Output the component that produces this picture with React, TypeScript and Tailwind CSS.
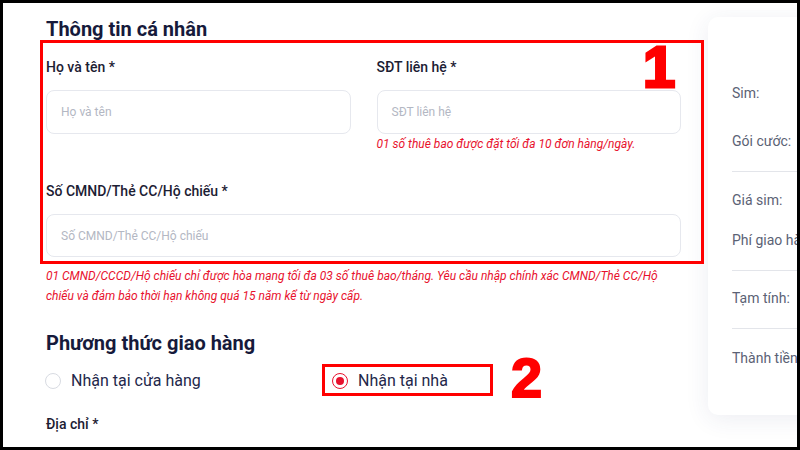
import React from 'react';

const Field: React.FC<{ label: string; placeholder: string; note?: string }> = ({ label, placeholder, note }) => (
  <div className="flex flex-col">
    <div className="h-5 text-[14px] leading-5 font-medium text-[#1c2033]">{label}</div>
    <div className="mt-[13px] h-[44px] rounded-lg border border-[#e6e8ee] bg-white px-[14px] flex items-center text-[12px] text-[#b3b7c3]">
      {placeholder}
    </div>
    {note && <div className="mt-[2px] h-4 text-[12px] leading-4 italic text-[#e8112d]">{note}</div>}
  </div>
);

const Radio: React.FC<{ checked?: boolean; label: string }> = ({ checked, label }) => (
  <label className="flex items-center gap-[10px]">
    <span
      className={`w-4 h-4 rounded-full border-[1.5px] flex items-center justify-center ${
        checked ? "border-[#e8112d]" : "border-[#d8dbe2]"
      }`}
    >
      {checked && <span className="w-2 h-2 rounded-full bg-[#e8112d]" />}
    </span>
    <span className="text-[16px] leading-6 text-[#23274a]">{label}</span>
  </label>
);

const SummaryRow: React.FC<{ label: string; className?: string }> = ({ label, className = "" }) => (
  <div className={`h-5 text-[14px] leading-5 text-[#5b6275] whitespace-nowrap ${className}`}>{label}</div>
);

export default function App() {
  return (
    <div className="w-[800px] h-[450px] border-[3px] border-black bg-white overflow-hidden [font-family:Roboto,'Noto_Sans',sans-serif]">
      <div className="relative flex h-full">
        {/* form */}
        <div className="w-[678px] shrink-0 pl-[43px] pt-[12px]">
          <h2 className="h-7 text-[20px] leading-7 font-bold text-[#161a3b]">Thông tin cá nhân</h2>
          <div className="mt-[14px] grid grid-cols-2 gap-x-[26px] w-[635px] items-start">
            <Field label="Họ và tên *" placeholder="Họ và tên" />
            <Field
              label="SĐT liên hệ *"
              placeholder="SĐT liên hệ"
              note="01 số thuê bao được đặt tối đa 10 đơn hàng/ngày."
            />
          </div>
          <div className="mt-[29px] w-[635px]">
            <div className="h-5 text-[14px] leading-5 font-medium text-[#1c2033]">Số CMND/Thẻ CC/Hộ chiếu *</div>
            <div className="mt-[13px] h-[43px] rounded-lg border border-[#e6e8ee] px-[14px] flex items-center text-[12px] text-[#b3b7c3]">
              Số CMND/Thẻ CC/Hộ chiếu
            </div>
          </div>
          <p className="mt-[9px] w-[630px] text-[12px] leading-5 italic text-[#e8112d]">
            01 CMND/CCCD/Hộ chiếu chỉ được hòa mạng tối đa 03 số thuê bao/tháng. Yêu cầu nhập chính xác CMND/Thẻ CC/Hộ chiếu và đảm bảo thời hạn không quá 15 năm kể từ ngày cấp.
          </p>
          <h2 className="mt-[23px] h-7 text-[20px] leading-7 font-bold text-[#161a3b]">Phương thức giao hàng</h2>
          <div className="mt-[12px] flex -ml-[1px]">
            <div className="w-[287px]">
              <Radio label="Nhận tại cửa hàng" />
            </div>
            <Radio checked label="Nhận tại nhà" />
          </div>
          <div className="mt-[21px] h-5 text-[14px] leading-5 font-medium text-[#1c2033]">Địa chỉ *</div>
        </div>

        {/* order summary */}
        <div className="mt-[14px] ml-[27px] w-[300px] h-[398px] shrink-0 rounded-[10px] bg-white shadow-[0_4px_24px_rgba(40,50,110,0.09)] pl-6 pt-[66px]">
          <SummaryRow label="Sim:" />
          <SummaryRow label="Gói cước:" className="mt-[28px]" />
          <div className="mt-[20px] border-t border-[#e3e5ea]" />
          <SummaryRow label="Giá sim:" className="mt-[18px]" />
          <SummaryRow label="Phí giao hàng:" className="mt-[20px]" />
          <div className="mt-[20px] border-t border-[#e3e5ea]" />
          <SummaryRow label="Tạm tính:" className="mt-[17px]" />
          <div className="mt-[20px] border-t border-[#e3e5ea]" />
          <SummaryRow label="Thành tiền:" className="mt-[19px]" />
        </div>

        {/* annotations */}
        <div className="absolute left-[37px] top-[37px] w-[664px] h-[224px] border-[3px] border-[#ff0000] pointer-events-none" />
        <div className="absolute left-[319px] top-[361px] w-[171px] h-[32px] border-[3px] border-[#ff0000] pointer-events-none" />
        <div className="absolute left-[640px] top-[35px] text-[58px] leading-none font-bold text-[#ff0000] [-webkit-text-stroke:3px_#ff0000] [font-family:'Liberation_Sans',Arial,sans-serif]">
          1
        </div>
        <div className="absolute left-[508px] top-[347px] text-[56px] leading-none font-bold text-[#ff0000] [-webkit-text-stroke:2px_#ff0000] [font-family:'Liberation_Sans',Arial,sans-serif]">
          2
        </div>
      </div>
    </div>
  );
}
